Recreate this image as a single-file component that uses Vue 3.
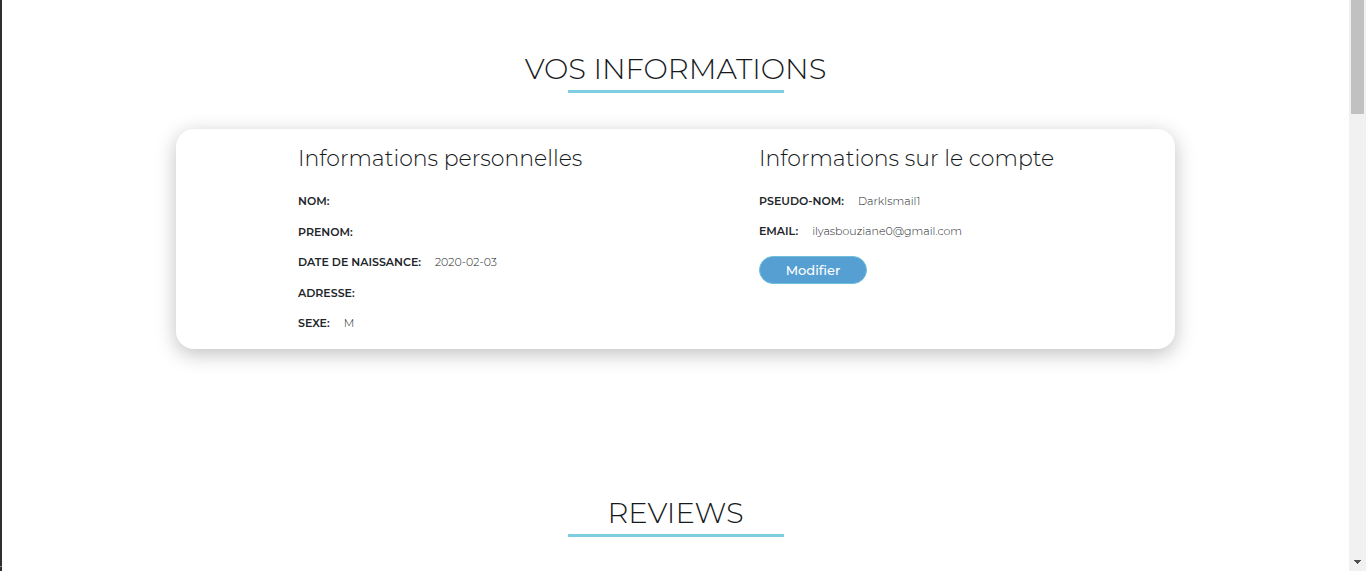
<script setup>
const personal = [
  { label: 'NOM:', value: '' },
  { label: 'PRENOM:', value: '' },
  { label: 'DATE DE NAISSANCE:', value: '2020-02-03' },
  { label: 'ADRESSE:', value: '' },
  { label: 'SEXE:', value: 'M' },
]
const account = [
  { label: 'PSEUDO-NOM:', value: 'DarkIsmail1' },
  { label: 'EMAIL:', value: 'ilyasbouziane0@gmail.com' },
]
</script>

<template>
  <div class="page">
    <div class="edge"></div>
    <main class="content">
      <section class="block">
        <h1 class="title">VOS INFORMATIONS</h1>
        <div class="card">
          <div class="column">
            <h2 class="subtitle">Informations personnelles</h2>
            <dl class="fields">
              <div v-for="f in personal" :key="f.label" class="field">
                <dt>{{ f.label }}</dt>
                <dd>{{ f.value }}</dd>
              </div>
            </dl>
          </div>
          <div class="column">
            <h2 class="subtitle">Informations sur le compte</h2>
            <dl class="fields">
              <div v-for="f in account" :key="f.label" class="field">
                <dt>{{ f.label }}</dt>
                <dd>{{ f.value }}</dd>
              </div>
            </dl>
            <button type="button" class="edit">Modifier</button>
          </div>
        </div>
      </section>
      <section class="block">
        <h1 class="title">REVIEWS</h1>
      </section>
    </main>
    <div class="scrollbar" aria-hidden="true">
      <div class="thumb"></div>
      <svg class="arrow" width="7" height="4" viewBox="0 0 7 4" shape-rendering="crispEdges">
        <path d="M0 0h7v1h-1v1h-1v1h-1v1h-1v-1h-1v-1h-1v-1h-1z" fill="#505050" />
      </svg>
    </div>
  </div>
</template>

<style>
body {
  margin: 0;
  background: #fff;
}
</style>

<style scoped>
.page {
  display: flex;
  min-height: 100vh;
  box-sizing: border-box;
  color: #212529;
  font-family: Montserrat, Inter, "Open Sans", sans-serif;
}
.edge {
  flex: none;
  width: 2px;
  background: linear-gradient(to top, #2f2f31 4px, #858585 4px, #858585 5px, #2f2f31 5px);
}
.content {
  flex: 1;
  min-width: 0;
  padding-top: 50px;
}
.block + .block {
  margin-top: 145px;
}
.title {
  margin: 0;
  color: #16191c;
  font-size: 29px;
  line-height: 38px;
  font-weight: 300;
  text-align: center;
}
.title::after {
  content: "";
  display: block;
  width: 216px;
  height: 3px;
  margin: 2px auto 0;
  background: #7fcde0;
}
.card {
  display: grid;
  grid-template-columns: 461fr 416fr;
  box-sizing: border-box;
  max-width: 999px;
  min-height: 220px;
  margin: 36px auto 0;
  padding: 16px 0 11px 122px;
  border-radius: 18px;
  background: #fff;
  box-shadow: 0 5px 20px rgba(0, 0, 0, 0.25);
}
.column {
  display: flex;
  flex-direction: column;
}
.subtitle {
  margin: 0 0 13px;
  color: #16191c;
  font-size: 22px;
  line-height: 28px;
  font-weight: 300;
}
.fields {
  display: flex;
  flex-direction: column;
  justify-content: space-between;
  margin: 0;
  font-size: 11px;
}
.fields:last-child {
  flex: 1;
}
.field {
  display: flex;
  gap: 14px;
  line-height: 30px;
}
dt {
  font-weight: 600;
}
dd {
  margin: 0;
  font-weight: 300;
}
.edit {
  width: 108px;
  height: 28px;
  margin: 10px 0 0;
  padding: 0;
  border: 1px solid #6fc0dc;
  border-radius: 14px;
  background: #569fd3;
  color: #fff;
  font: 500 13px/26px Montserrat, Inter, sans-serif;
}
.scrollbar {
  display: flex;
  flex: none;
  flex-direction: column;
  align-items: center;
  justify-content: space-between;
  width: 17px;
  box-sizing: border-box;
  padding-bottom: 7px;
  background: #f1f1f1;
}
.thumb {
  width: 13px;
  height: 114px;
  background: #c1c1c1;
}
</style>
